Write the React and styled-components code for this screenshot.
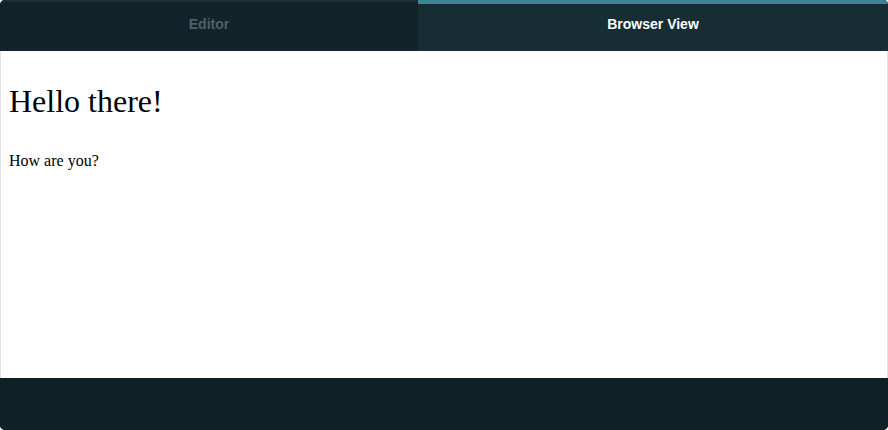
import styled, { createGlobalStyle } from "styled-components";

const GlobalStyle = createGlobalStyle`
  html, body {
    margin: 0;
    padding: 0;
    background: #ffffff;
  }
`;

const Frame = styled.div`
  width: 888px;
  height: 430px;
  display: flex;
  flex-direction: column;
  border-radius: 5px;
  overflow: hidden;
  background: #0f2026;
`;

const TabBar = styled.div`
  display: flex;
  height: 51px;
  flex-shrink: 0;
  background: #12232a;
  border-top: 2px solid #172f36;
  box-sizing: border-box;
`;

const Tab = styled.div`
  width: ${(p) => p.$width};
  display: flex;
  align-items: center;
  justify-content: center;
  box-sizing: border-box;
  margin-top: ${(p) => (p.$active ? "-2px" : "0")};
  border-top: ${(p) => (p.$active ? "4px solid #3a8696" : "none")};
  padding-bottom: ${(p) => (p.$active ? "7px" : "5px")};
  background: ${(p) => (p.$active ? "#152d33" : "transparent")};
  color: ${(p) => (p.$active ? "#ffffff" : "#4f6166")};
  font-family: "Liberation Sans", Arial, sans-serif;
  font-weight: 700;
  font-size: 14px;
`;

const Preview = styled.div`
  height: 327px;
  flex-shrink: 0;
  background: #ffffff;
  border-left: 1px solid #dfe3e6;
  border-right: 1px solid #dfe3e6;
  padding: 8px;
  box-sizing: border-box;
  font-family: "Liberation Serif", "Times New Roman", serif;
  color: #000000;
`;

const Heading = styled.h1`
  font-size: 32px;
  font-weight: 400;
  line-height: 43px;
  margin: 21px 0 29px;
`;

const Text = styled.p`
  font-size: 16px;
  margin: 16px 0;
`;

const Footer = styled.div`
  flex: 1;
  background: #0f2026;
`;

export default function App() {
  return (
    <>
      <GlobalStyle />
      <Frame>
        <TabBar>
          <Tab $width="418px">Editor</Tab>
          <Tab $width="470px" $active>
            Browser View
          </Tab>
        </TabBar>
        <Preview>
          <Heading>Hello there!</Heading>
          <Text>How are you?</Text>
        </Preview>
        <Footer />
      </Frame>
    </>
  );
}
